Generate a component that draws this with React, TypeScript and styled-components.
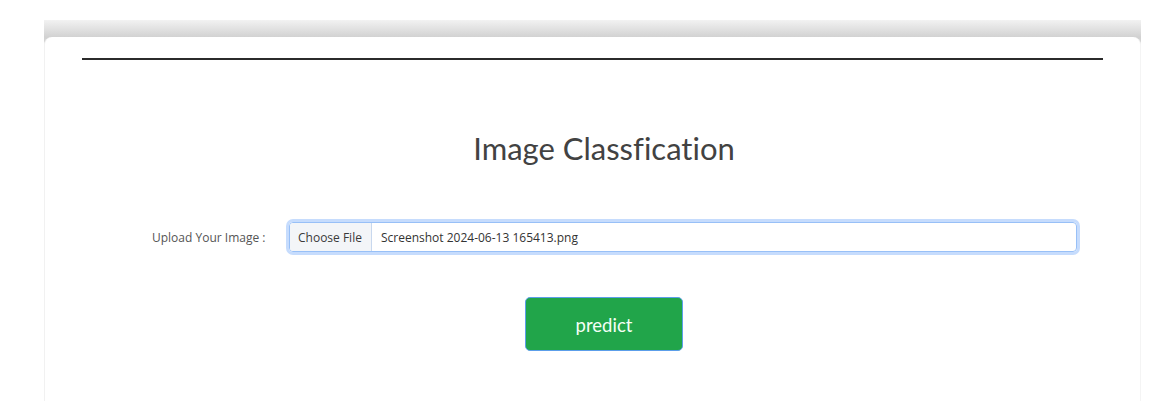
import React from "react";
import styled, { createGlobalStyle } from "styled-components";

const Global = createGlobalStyle`
  html, body { margin: 0; padding: 0; background: #ffffff; }
  body { font-family: "Noto Sans", "Open Sans", sans-serif; }
  * { box-sizing: border-box; }
`;

const Page = styled.div`
  width: 1174px;
  height: 401px;
  overflow: hidden;
  padding: 20px 33px 0 44px;
`;

const Frame = styled.div`
  width: 1097px;
  padding-top: 17px;
  background: linear-gradient(
    to bottom,
    #f2f2f2 0px,
    #d2d2d2 17px,
    #d4d4d4 22px,
    #ffffff 26px
  );
`;

const Card = styled.div`
  background: #ffffff;
  border-radius: 8px 8px 0 0;
  border-left: 1px solid #f1f1f1;
  border-right: 1px solid #f4f4f4;
  height: 380px;
  padding: 21px 37px 0 37px;
`;

const Rule = styled.hr`
  margin: 0;
  border: 0;
  height: 2px;
  background: #2b2b2b;
`;

const Content = styled.div`
  margin-left: 47px;
  width: 950px;
  display: flex;
  flex-direction: column;
  align-items: center;
`;

const Title = styled.h1`
  margin: 68px 0 0 0;
  font-family: Lato, "Noto Sans", sans-serif;
  font-weight: 400;
  font-size: 31px;
  line-height: 40px;
  color: #424242;
  font-variant-ligatures: none;
`;

const Row = styled.div`
  align-self: stretch;
  display: flex;
  align-items: center;
  margin-top: 54px;
`;

const Label = styled.label`
  width: 158px;
  padding-left: 23px;
  font-family: "Open Sans", sans-serif;
  font-size: 12px;
  color: #555555;
`;

const FileBox = styled.div`
  flex: 1;
  margin: 0 2px 0 2px;
  height: 30px;
  display: flex;
  align-items: stretch;
  border: 1px solid #98c0f7;
  border-radius: 4px;
  box-shadow: 0 0 0 3px #c6dcfd;
  overflow: hidden;
  font-family: "Open Sans", sans-serif;
  font-size: 12px;
  color: #333333;
`;

const ChooseButton = styled.span`
  display: flex;
  align-items: center;
  padding: 0 9px 0 8px;
  background: #f3f5f8;
  border-right: 1px solid #c8d8ee;
  color: #3a3a3a;
`;

const FileName = styled.span`
  display: flex;
  align-items: center;
  padding-left: 9px;
`;

const Predict = styled.button`
  margin-top: 45px;
  width: 158px;
  height: 54px;
  border-radius: 5px;
  border: 1px solid #5c9eea;
  background: #21a54a;
  color: #f4fff6;
  font-family: Lato, "Noto Sans", sans-serif;
  font-size: 18.5px;
  padding-top: 2px;
  cursor: pointer;
`;

export default function App() {
  return (
    <>
      <Global />
      <Page>
        <Frame>
          <Card>
            <Rule />
            <Content>
              <Title>Image Classfication</Title>
              <Row>
                <Label>Upload Your Image :</Label>
                <FileBox>
                  <ChooseButton>Choose File</ChooseButton>
                  <FileName>Screenshot 2024-06-13 165413.png</FileName>
                </FileBox>
              </Row>
              <Predict>predict</Predict>
            </Content>
          </Card>
        </Frame>
      </Page>
    </>
  );
}
